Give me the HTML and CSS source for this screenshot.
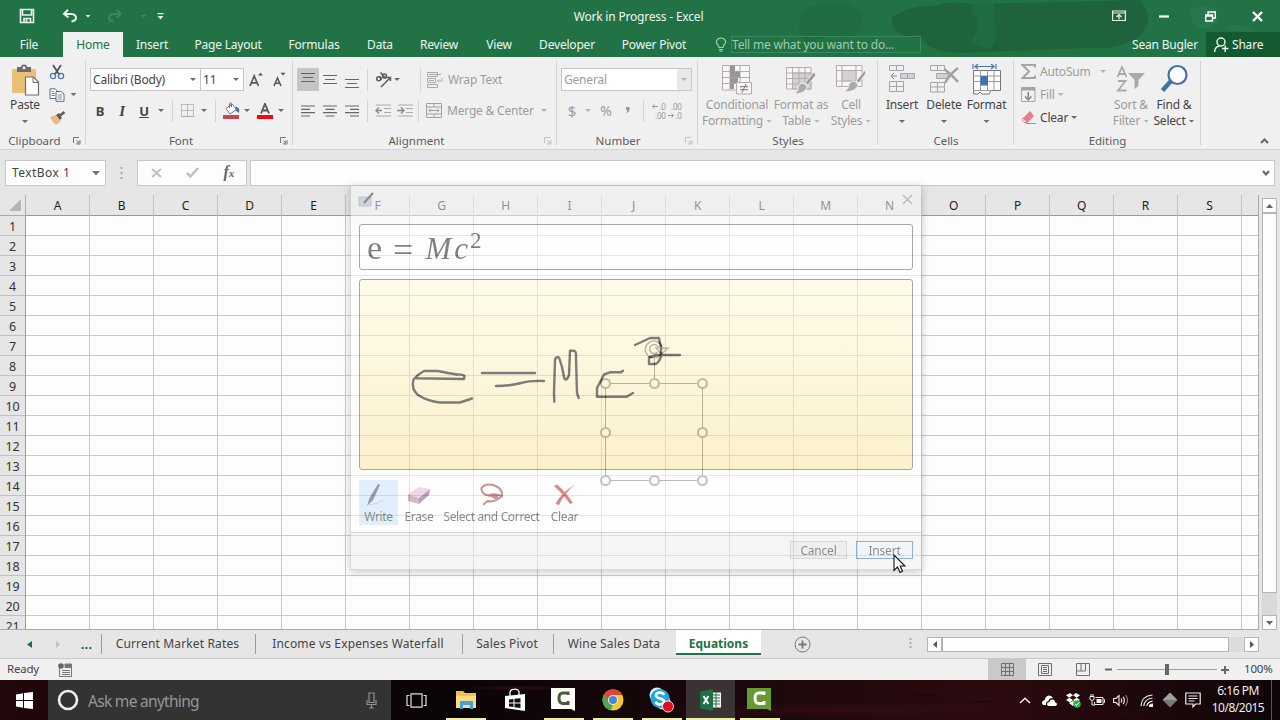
FILE: index.html
```html
<!DOCTYPE html>
<html lang="en">
<head>
<meta charset="utf-8">
<title>Work in Progress - Excel</title>
<link rel="stylesheet" href="styles.css">
</head>
<body>
<div class="app">
  <header class="top">
    <svg class="top-art" width="500" height="57" viewBox="780 0 500 57">
      <path d="M800 22Q802 6 822 4Q852 0 862 16Q866 36 842 38Q830 34 812 42Q796 40 800 22Z" fill="#206c41"/>
      <path d="M892 18Q910 4 935 6Q950 0 975 4L1140 0Q1156 18 1140 36Q1120 50 1090 48L980 52Q930 56 922 38Q890 38 892 18Z" fill="#1e633c"/>
      <path d="M972 12Q984 26 970 42L990 50Q1000 38 994 22L994 4L972 4Z" fill="#206c41"/>
      <path d="M1190 12Q1200 2 1214 8Q1224 22 1208 28Q1192 30 1190 12ZM1222 30Q1240 18 1254 32Z" fill="#2a7a4e" opacity=".6"/>
    </svg>
    <div class="titlebar">
      <span class="ic"><svg width="16" height="16" viewBox="0 0 16 16" fill="none" stroke="#e6f2ea" stroke-width="1.6"><path d="M1.5 1.5H14.500V14.500H1.500ZM3.500 2V7H12.500V2M5 14V10.500H11.500V14M7.500 11V14"/></svg></span>
      <span class="ic"><svg width="16" height="14" viewBox="0 0 16 14" fill="none" stroke="#e6f2ea" stroke-width="2"><path d="M6 .8L2 5L6.500 8.500M2.500 5H9.500Q14 5.500 14 9Q13.500 12 9.500 12.500"/></svg></span>
      <span class="ic"><i class="dd light"></i></span>
      <span class="ic"><svg width="16" height="14" viewBox="0 0 16 14" fill="none" stroke="#418961" stroke-width="1.800"><path d="M10 .8L14 5L9.500 8.500M13.500 5H6.500Q2 5.500 2 9Q2.500 12 6.500 12.500"/></svg></span>
      <span class="ic"><i class="dd faint"></i></span>
      <span class="ic"><svg width="7" height="7" viewBox="0 0 7 7" fill="#e6f2ea"><path d="M.5 0H6.500V1.200H.5ZM.5 3H6.500L3.500 6.500Z"/></svg></span>
      <span class="title">Work in Progress - Excel</span>
      <span class="ic"><svg width="14" height="12" viewBox="0 0 14 12" fill="none" stroke="#e6f2ea" stroke-width="1.200"><path d="M.6 1H13.400V10.500H.6ZM.6 3H13.400M7 9.500V5M4.500 7L7 4.600L9.500 7"/></svg></span>
      <span class="ic"><svg width="10" height="3"><path d="M0 1.500H10" stroke="#fff" stroke-width="2.200"/></svg></span>
      <span class="ic"><svg width="11" height="11" viewBox="0 0 11 11" fill="none" stroke="#fff" stroke-width="1.400"><path d="M.7 4H7.500V10H.7ZM.7 5H7.500M3 3.500V1H10.300V7H8"/></svg></span>
      <span class="ic"><svg width="11" height="11"><path d="M1 1L10 10M10 1L1 10" stroke="#fff" stroke-width="2.300"/></svg></span>
    </div>
    <nav class="tabs">
      <span>File</span><span></span><span class="on">Home</span><span>Insert</span><span>Page Layout</span><span>Formulas</span><span>Data</span><span>Review</span><span>View</span><span>Developer</span><span>Power Pivot</span>
      <span class="ic"><svg width="12" height="15" viewBox="0 0 12 15" fill="none" stroke="#9fcbb0" stroke-width="1.200"><path d="M4 10.500Q4 9 2.500 7.500Q1 6 1.500 4Q2.500 1 6 1Q9.500 1 10.500 4Q11 6 9.500 7.500Q8 9 8 10.500ZM4 12.500H8M4.500 14.200H7.500"/></svg></span>
      <span class="tell">Tell me what you want to do...</span>
      <span></span><span>Sean Bugler</span>
      <span class="share"><svg width="16" height="16" viewBox="0 0 16 16" fill="none" stroke="#e6f2ea" stroke-width="1.500"><circle cx="8" cy="5" r="4"/><path d="M1.500 15Q2 9.500 6.500 9M9 11.500H15.500M12.200 8.500V15"/></svg>Share</span>
    </nav>
  </header>

  <section class="ribbon">
    <div class="group g-clip">
      <div class="body">
        <div class="big"><span class="pic"><svg width="30" height="32" viewBox="0 0 30 32"><path d="M2 5H26V29H2Z" fill="#e9bf78"/><path d="M7 3H11Q11 .5 14 .5Q17 .5 17 3H21V8H7Z" fill="#6b6b6b"/><circle cx="14" cy="3.700" r="1.500" fill="#eee"/><path d="M15.500 13H23.500L28.500 18V31H15.500Z" fill="#fff" stroke="#6f6f6f" stroke-width="1.200"/><path d="M23 13V18.500H28" fill="none" stroke="#6f6f6f"/></svg></span><span>Paste</span><i class="dd"></i></div>
        <div class="stack">
          <span class="ic"><svg width="16" height="16" viewBox="0 0 16 16" fill="none"><path d="M4 1L10.500 11M12 1L5.500 11" stroke="#555" stroke-width="1.800"/><circle cx="4" cy="12" r="2.600" stroke="#4f78a8" stroke-width="1.300"/><circle cx="12" cy="12" r="2.600" stroke="#4f78a8" stroke-width="1.300"/></svg></span><span></span>
          <span class="ic"><svg width="16" height="14" viewBox="0 0 16 14" fill="#fff" stroke="#5b6e88"><path d="M1 .8H6L8.500 3V10.500H1Z"/><path d="M7 3.500H12L15 6V13.300H7Z"/><path d="M2.500 3.500H5M2.500 5.500H6M2.500 7.500H6M8.500 7H13M8.500 9H13M8.500 11H13" stroke-width=".8"/></svg></span><i class="dd"></i>
          <span class="ic"><svg width="17" height="14" viewBox="0 0 17 14"><path d="M1 6L7 4L12 10L7 14L4 11Z" fill="#e5bd80"/><path d="M7 4L10 2L13 7L11 9Z" fill="#5c5c5c"/><path d="M11 4.500L15.500 1" stroke="#5c5c5c" stroke-width="2.500"/></svg></span><span></span>
        </div>
      </div>
      <div class="name">Clipboard<svg class="launch" width="8" height="8" viewBox="0 0 8 8"><path d="M.5 6V.5H6M3.500 3.500L6 6M7 3.500V7H3.500Z"/></svg></div>
    </div>

    <div class="group g-font">
      <div class="body rows">
        <div class="font1"><span class="field">Calibri (Body)<i class="dd"></i></span><span class="field">11<i class="dd"></i></span>
          <span class="ic"><svg width="14" height="16" viewBox="0 0 14 16" fill="none" stroke="#5b5b5b" stroke-width="1.700"><path d="M1 14L5.200 4L9.500 14M2.500 10.800H8"/><path d="M9 3.500L11.500 .8L14 3.500Z" fill="#456" stroke="none"/></svg></span>
          <span class="ic"><svg width="13" height="16" viewBox="0 0 13 16" fill="none" stroke="#5b5b5b" stroke-width="1.600"><path d="M1 14L4.500 6L8 14M2.200 11.200H6.800"/><path d="M7.500 .8H12.500L10 3.500Z" fill="#456" stroke="none"/></svg></span></div>
        <div class="font2"><b>B</b><b class="it">I</b><b class="un">U</b><i class="dd"></i><i class="vs"></i>
          <svg width="13" height="13" viewBox="0 0 13 13" fill="none" stroke="#8c8c8c"><path d="M.5 .5H12.500V12.500M.5 .5V12.500M6.500 .5V12.500M.5 6.500H12.500" stroke-dasharray="1 1"/><path d="M0 12.500H13" stroke="#aaa"/></svg><i class="dd"></i><i class="vs"></i>
          <svg width="17" height="17" viewBox="0 0 17 17"><path d="M3 6.500L9 2L13.500 7.500L7 12Z" fill="#fff" stroke="#777"/><path d="M6.500 6V1.500Q7.500 0 8.500 1.500V5" fill="none" stroke="#666"/><path d="M12.500 4.500Q18 6 15.500 11L12.500 8Z" fill="#4a72a5"/><path d="M0 13H16V17H0Z" fill="#cc4651"/></svg><i class="dd"></i>
          <svg width="16" height="16" viewBox="0 0 16 16"><path d="M4 10.500L8 .8L12 10.500M5.500 7.500H10.500" fill="none" stroke="#595959" stroke-width="1.800"/><path d="M0 12H16V16H0Z" fill="#f00a14"/></svg><i class="dd"></i></div>
      </div>
      <div class="name">Font<svg class="launch" width="8" height="8" viewBox="0 0 8 8"><path d="M.5 6V.5H6M3.500 3.500L6 6M7 3.500V7H3.500Z"/></svg></div>
    </div>

    <div class="group g-align">
      <div class="body rows">
        <div class="al1"><span class="ic sel"><svg width="14" height="18"><path d="M0 3.500H14M2 7.500H12M0 11.500H14" class="ln" transform="translate(0 -1)"/></svg></span>
          <svg width="14" height="10"><path d="M0 .5H14M2 4.500H12M0 8.500H14" class="ln"/></svg>
          <svg width="14" height="18"><path d="M0 9.500H14M2 13.500H12M0 17.500H14" class="ln" transform="translate(0 -1)"/></svg><i class="vs"></i>
          <svg width="17" height="16" viewBox="0 0 17 16" fill="none" stroke="#5e5e5e" stroke-width="1.500"><circle cx="3.700" cy="6.700" r="2"/><path d="M4.500 4.300L7 7.500M5.500 .5L11 6.500"/><circle cx="9.500" cy="4" r="2"/><path d="M6 15L15.500 5.500M12 5.500H15.500V9"/></svg><i class="dd"></i><span></span><i class="vs"></i>
          <svg width="16" height="16" viewBox="0 0 16 16" fill="none" stroke="#aaa"><path d="M.5 .5H10.500V4.500H.5ZM.5 6.500H8.500V10.500H.5ZM.5 12.500H10.500V15.500H.5ZM2 2.500H14M2 8.500H7M15 6V9H10.500M12 7.500L10.500 9L12 10.500"/></svg><span class="dim tx">Wrap Text</span></div>
        <div class="al2"><svg width="14" height="12"><path d="M0 1H14M0 4.300H9M0 7.600H14M0 11H9" class="ln"/></svg>
          <svg width="14" height="12"><path d="M0 1H14M2.500 4.300H11.500M0 7.600H14M2.500 11H11.500" class="ln"/></svg>
          <svg width="14" height="12"><path d="M0 1H14M5 4.300H14M0 7.600H14M5 11H14" class="ln"/></svg><i class="vs"></i>
          <svg width="16" height="13" fill="none" stroke="#aaa"><path d="M1 1H16M9 4.500H16M9 8.500H16M1 12H16"/><path d="M1 6.500H7M4 3.500L1 6.500L4 9.500" stroke="#8a8a8a" stroke-width="1.400"/></svg>
          <svg width="16" height="13" fill="none" stroke="#aaa"><path d="M1 1H16M9 4.500H16M9 8.500H16M1 12H16"/><path d="M0 6.500H7M4 3.500L7 6.500L4 9.500" stroke="#8a8a8a" stroke-width="1.400"/></svg><i class="vs"></i>
          <svg width="16" height="15" viewBox="0 0 16 15" fill="none" stroke="#a59ea3"><path d="M.5 .5H15.500V14.500H.5ZM.5 4H15.500M.5 11H15.500M8 .5V4M8 11V14.500M3 7.500H13M5 5.500L3 7.500L5 9.500M11 5.500L13 7.500L11 9.500"/></svg><span class="dim tx">Merge &amp; Center</span><i class="dd pale"></i></div>
      </div>
      <div class="name">Alignment<svg class="launch pale" width="8" height="8" viewBox="0 0 8 8"><path d="M.5 6V.5H6M3.500 3.500L6 6M7 3.500V7H3.500Z"/></svg></div>
    </div>

    <div class="group g-num">
      <div class="body rows">
        <div class="num1"><span class="field dim">General<span class="drop"><i class="dd pale"></i></span></span></div>
        <div class="num2"><span class="sym">$</span><i class="dd pale"></i><span class="sym pc">%</span><svg width="5" height="7"><path d="M1 0H4.500V3Q4 5.500 1 6.500Q2.500 4.500 2 3H1Z" fill="#999"/></svg><i class="vs"></i>
          <span class="dec"><span><svg width="6" height="5" fill="none" stroke="#999"><path d="M.5 2.500H6M2.500 .5L.5 2.500L2.500 4.500"/></svg>.0</span><span>.00</span></span>
          <span class="dec"><span>.00</span><span><svg width="6" height="5" fill="none" stroke="#999"><path d="M0 2.500H5.500M3.500 .5L5.500 2.500L3.500 4.500"/></svg>.0</span></span></div>
      </div>
      <div class="name">Number<svg class="launch pale" width="8" height="8" viewBox="0 0 8 8"><path d="M.5 6V.5H6M3.500 3.500L6 6M7 3.500V7H3.500Z"/></svg></div>
    </div>

    <div class="group g-style">
      <div class="body">
        <div class="big dim"><span class="pic"><svg width="30" height="31" viewBox="0 0 30 31" fill="none" stroke="#b3abb0"><path d="M.5 1.500H27.500V26H.5Z" fill="#f8f6f7"/><path d="M.5 7.500H27M.5 13.500H27M.5 19.500H27M8 1V26M18 1V26"/><path d="M8 1.500H13V7.500H8ZM8 7.500H18V13H8ZM8 13.500H16V19H8ZM8 19.500H12V25H8Z" fill="#99969a" stroke="none"/><path d="M14.500 18.500H29.500V30H14.500Z" fill="#f6f3f5"/><path d="M18 22.700H26M18 25.700H26M24 20L20 28.500" stroke="#777"/></svg></span><span>Conditional</span><span>Formatting<i class="dd pale"></i></span></div>
        <div class="big dim"><span class="pic"><svg width="30" height="31" viewBox="0 0 30 31" fill="none" stroke="#b3abb0"><path d="M.5 3.500H25V25H.5Z" fill="#f8f6f7"/><path d="M6.500 9H25V25H6.500Z" fill="#d3d0d6"/><path d="M.5 9H25M.5 14.500H25M.5 20H25M6.500 3V25M13 3V25M19 3V25"/><path d="M28 8L19 19L22 21L30 11Z" fill="#999" stroke="#eee"/><path d="M17 19Q21 20 21 24Q18 30 8 30Q13 27 12.500 22Q14 19 17 19Z" fill="#aaa" stroke="#f0f0f0"/></svg></span><span>Format as</span><span>Table<i class="dd pale"></i></span></div>
        <div class="big dim"><span class="pic"><svg width="30" height="31" viewBox="0 0 30 31" fill="none" stroke="#b3abb0"><path d="M.5 1.500H26V22.500H.5Z" fill="#f8f6f7"/><path d="M.5 6.500H26M.5 17H26M6 1V22M20 1V22"/><path d="M6 6.500H20V17H6Z" fill="#d3d0d6"/><path d="M29 6L20 17L23 19L30 9Z" fill="#999" stroke="#eee"/><path d="M18 17Q22 18 22 22Q19 28 8 28Q13 25 13 20Q15 17 18 17Z" fill="#aaa" stroke="#f0f0f0"/></svg></span><span>Cell</span><span>Styles<i class="dd pale"></i></span></div>
      </div>
      <div class="name">Styles</div>
    </div>

    <div class="group g-cells">
      <div class="body">
        <div class="big"><span class="pic"><svg width="28" height="30" viewBox="0 0 28 30" fill="none" stroke="#aaa3a8"><path d="M1.500 1.500H15.500V6.500H1.500ZM8.500 1.500V6.500M1.500 17.500H15.500V27.500H1.500ZM8.500 17.500V27.500M1.500 22.500H15.500"/><path d="M12.500 9.500H26.500V14.500H12.500ZM19.500 9.500V14.500" fill="#ccd0d8"/><path d="M3 12H9M6 9L3 12L6 15" stroke="#888"/></svg></span><span>Insert</span><i class="dd"></i></div>
        <div class="big"><span class="pic"><svg width="30" height="30" viewBox="0 0 30 30" fill="none" stroke="#aaa3a8"><path d="M1.500 1.500H15.500V6.500H1.500ZM8.500 1.500V6.500M1.500 18.500H15.500V28H1.500ZM8.500 18.500V28M1.500 23H15.500"/><path d="M7.500 9.500H19V14.500H7.500Z" fill="#ccd0d8"/><path d="M15 5Q21 9 29 18M29 4Q21 10 16 19" stroke="#a2a0a2" stroke-width="2.500"/></svg></span><span>Delete</span><i class="dd"></i></div>
        <div class="big"><span class="pic"><svg width="30" height="32" viewBox="0 0 30 32" fill="none" stroke="#777"><path d="M1 0V5M24 0V5M3 2.500H22M6 0L3 2.500L6 5M19 0L22 2.500L19 5" stroke="#4b76a8" stroke-width="1.200"/><path d="M1.500 6.500H28.500V26.500H19L17 30H10L8 28L6 30H1.500Z" fill="#fff"/><path d="M1 12H28M1 17.500H28M1 26.500H20" stroke="#999"/><path d="M8.500 6V26M15.500 6V26M22 6V26" stroke="#999"/><path d="M8.500 12H16V21.500H8.500Z" fill="#3f73b0" stroke="none"/></svg></span><span>Format</span><i class="dd"></i></div>
      </div>
      <div class="name">Cells</div>
    </div>

    <div class="group g-edit">
      <div class="body">
        <div class="stack3">
          <svg width="15" height="15" viewBox="0 0 15 15"><path d="M14 3.500V1H1.500L8 7.500L1.500 14H14V11.500" fill="none" stroke="#a5a5a5" stroke-width="2"/></svg><span class="dim">AutoSum</span><i class="dd pale"></i>
          <svg width="15" height="15" viewBox="0 0 15 15" fill="none" stroke="#a5a5a5"><path d="M.5 .5H14V14.500H.5Z"/><path d="M.5 2H14" stroke-width="3"/><path d="M7.300 5V12.500M4 9.500L7.300 12.800L10.500 9.500" stroke="#888" stroke-width="1.600"/></svg><span class="dim">Fill<i class="dd pale"></i></span><span></span>
          <svg width="15" height="14" viewBox="0 0 15 14"><path d="M2 7L9 0L13 5L7 11.500H4Z" fill="#e2818f"/><path d="M2 7L6 11.500H3.500L1 9Z" fill="#fff" stroke="#d46d7d" stroke-width=".8"/><path d="M5 12.500H15" stroke="#999"/></svg><span>Clear<i class="dd"></i></span><span></span>
        </div>
        <div class="big dim"><span class="pic"><svg width="30" height="30" viewBox="0 0 30 30" fill="none" stroke="#a9a9a9" stroke-width="1.800"><path d="M1.500 13L6 3L10.500 13M3 10H9M2 17H9.500L2 26.500H10.500"/><path d="M12 9H29L22.500 16V22L18.500 25V16Z" fill="#aaa" stroke="none"/></svg></span><span>Sort &amp;</span><span>Filter<i class="dd pale"></i></span></div>
        <div class="big"><span class="pic"><svg width="28" height="30" viewBox="0 0 28 30"><path d="M2.500 26.500L11 17" stroke="#4472a8" stroke-width="4.500"/><circle cx="17.500" cy="11" r="9" fill="#fff" stroke="#4472a8" stroke-width="2.200"/></svg></span><span>Find &amp;</span><span>Select<i class="dd"></i></span></div>
      </div>
      <div class="name">Editing</div>
    </div>
    <div class="collapse"><svg width="9" height="6"><path d="M1 5L4.500 1.500L8 5" fill="none" stroke="#666" stroke-width="2"/></svg></div>
  </section>

  <section class="fbar">
    <div class="nbox"><span>TextBox 1</span><svg width="8" height="5"><path d="M0 0H8L4 4.500Z" fill="#777"/></svg></div>
    <svg class="grip" width="3" height="12"><path d="M1.500 0V12" stroke="#aaa" stroke-width="2" stroke-dasharray="2 3"/></svg>
    <div class="fxbox"><svg width="11" height="10"><path d="M1 1L10 9M10 1L1 9" stroke="#c0c0c0" stroke-width="2"/></svg><svg width="13" height="11"><path d="M1 6L4.500 9.500L12 1" stroke="#c0c0c0" stroke-width="2.500" fill="none"/></svg><em>f<small>x</small></em></div>
    <div class="finput"><svg width="8" height="6"><path d="M1 1L4 4.500L7 1" fill="none" stroke="#666" stroke-width="2"/></svg></div>
  </section>

  <main class="work">
    <div class="sheet">
      <div class="corner"><svg width="12" height="12"><path d="M12 0V12H0Z" fill="#b5b5b5"/></svg></div>
      <div class="cols"><span>A</span><span>B</span><span>C</span><span>D</span><span>E</span><span>F</span><span>G</span><span>H</span><span>I</span><span>J</span><span>K</span><span>L</span><span>M</span><span>N</span><span>O</span><span>P</span><span>Q</span><span>R</span><span>S</span></div>
      <div class="nums"><span>1</span><span>2</span><span>3</span><span>4</span><span>5</span><span>6</span><span>7</span><span>8</span><span>9</span><span>10</span><span>11</span><span>12</span><span>13</span><span>14</span><span>15</span><span>16</span><span>17</span><span>18</span><span>19</span><span>20</span><span>21</span></div>
      <div class="cells"></div>
    </div>
    <div class="vscroll"><span class="sbtn"><svg width="7" height="4"><path d="M0 4H7L3.500 0Z" fill="#666"/></svg></span><span class="vthumb"></span><span class="vtrack"></span><span class="sbtn"><svg width="7" height="4"><path d="M0 0H7L3.500 4Z" fill="#666"/></svg></span></div>

    <svg class="shape" width="112" height="150" viewBox="598 338 112 150" fill="none" stroke="#707070">
      <path d="M605.500 383.500H702.500V480.500H605.500ZM654.500 359V383"/>
      <g fill="#fff" stroke="#808080" stroke-width="2"><circle cx="605.500" cy="383.500" r="4.500"/><circle cx="654.500" cy="383.500" r="4.500"/><circle cx="702.500" cy="383.500" r="4.500"/><circle cx="605.500" cy="432.500" r="4.500"/><circle cx="702.500" cy="432.500" r="4.500"/><circle cx="605.500" cy="480.500" r="4.500"/><circle cx="654.500" cy="480.500" r="4.500"/><circle cx="702.500" cy="480.500" r="4.500"/></g>
      <path d="M661 354A8.500 8.500 0 1 1 662 347M657.500 352A4.500 4.500 0 1 1 658.500 348M658.500 348H656L661.500 354L668 348H662" stroke-width="1.400"/>
    </svg>

    <div class="dialog">
      <div class="dhead"><svg width="17" height="16" viewBox="0 0 17 16"><path d="M1 5H13V14H1Z" fill="#b8c4d0" stroke="#9aa6b2"/><path d="M6 11L15 1" stroke="#333" stroke-width="2"/></svg><svg width="11" height="11"><path d="M1 1L10 10M10 1L1 10" stroke="#8c8c8c" stroke-width="1.400"/></svg></div>
      <div class="preview"><span class="up">e</span><span class="eq">=</span><i class="var">M</i><i class="var c">c</i><sup>2</sup></div>
      <div class="ink"><svg width="553" height="189" viewBox="360 280 553 189" fill="none" stroke="#080300" stroke-width="2.400" stroke-linejoin="round" stroke-linecap="round">
        <path d="M416.700 378.300L464 379L464.500 376Q462 374 457 374.500L448 373L438 371L424 371Q418 374 413.500 379.500Q411 389 418 395Q427 401 440 402.500H460L472 398.500"/>
        <path d="M482 373H535M496 386Q510 386 521 383Q530 380.500 544 381"/>
        <path d="M554.300 401.700L554 393L555 360Q556 356 559 357.500L562 367L564 377Q566 383 569 375L570 350.700H574Q576.500 351 576 358L577 393L578.700 398"/>
        <path d="M623 370.700L621 372.300H610L604 374.500L597 388V396.700H626.700L633 393"/>
        <path d="M635 345L650 338H659L661 348V357Q658 364 655 364H649V357.500L656.700 355H680"/>
      </svg></div>
      <div class="tools">
        <div class="tool on"><svg width="20" height="24" viewBox="0 0 20 24"><path d="M1 23L3.500 15L12 1L14 2L7 17Z" fill="#3d3f48"/><path d="M3 22Q12 21 17 17" stroke="#aaa" fill="none"/></svg>Write</div>
        <div class="tool"><svg width="24" height="20" viewBox="0 0 24 20"><path d="M1 9L12 2L23 4L12 13Z" fill="#dfb7cd"/><path d="M1 9L12 13V19L1 16Z" fill="#b07a9c"/><path d="M12 13L23 4L22 10L12 19Z" fill="#7d4a68"/></svg>Erase</div>
        <div class="tool"><svg width="24" height="24" viewBox="0 0 24 24" fill="none" stroke="#9a2c30" stroke-width="2"><path d="M18 13Q1 14 1.500 5Q5 0 13 2Q23 5 22 13Q14 10 10 12Q18 18 22 13M22 13Q14 20 8 18Q5 19 3.500 22"/></svg>Select and Correct</div>
        <div class="tool"><svg width="24" height="24" viewBox="0 0 24 24" fill="#c01c12"><path d="M1 3L4 1.500Q12 8 20 20L17 21Q11 12 1 3ZM22.500 1Q12 9 6 22L2.500 21Q8 10 22.500 1Z"/></svg>Clear</div>
      </div>
      <div class="dfoot"><span class="btn">Cancel</span><span class="btn pri">Insert</span></div>
    </div>
    <svg class="cursor" width="13" height="20" viewBox="0 0 13 20"><path d="M1 1V16.500L4.500 13L7 18.500L9.500 17.300L7.200 12H12Z" fill="#fff" stroke="#111" stroke-width="1.100"/></svg>
  </main>

  <section class="stabs">
    <span class="ic"><svg width="5" height="7"><path d="M5 0V7L0 3.500Z" fill="#1c6b45"/></svg></span><span class="ic"><svg width="5" height="7"><path d="M0 0V7L4 3.500Z" fill="#c2c2c2"/></svg></span><b class="dots">...</b>
    <span class="st">Current Market Rates</span><span class="st">Income vs Expenses Waterfall</span><span class="st">Sales Pivot</span><span class="st">Wine Sales Data</span><span class="st cur">Equations</span>
    <span class="ic"><svg width="17" height="17" fill="none" stroke="#777"><circle cx="8.500" cy="8.500" r="7.500"/><path d="M4.500 8.500H12.500M8.500 4.500V12.500" stroke-width="1.800"/></svg></span>
    <span></span><span class="ic"><svg width="3" height="12"><path d="M1.500 0V12" stroke="#aaa" stroke-width="2" stroke-dasharray="2 2"/></svg></span>
    <div class="hscroll"><span class="sbtn"><svg width="4" height="7"><path d="M4 0V7L0 3.500Z" fill="#555"/></svg></span><span class="hthumb"></span><span></span><span class="sbtn"><svg width="4" height="7"><path d="M0 0V7L4 3.500Z" fill="#555"/></svg></span></div>
  </section>

  <section class="status">
    <span class="ready">Ready</span>
    <span class="ic"><svg width="14" height="14" viewBox="0 0 14 14"><path d="M1.500 5V13.500H13.500V1H7V4.500H13.500M4 7.500H12M4 9.500H12M4 11.500H12" fill="none" stroke="#777"/><path d="M7 1H13V4H7Z" fill="#777"/><circle cx="3" cy="3" r="2.800" fill="#666"/></svg></span>
    <span></span>
    <span class="ic vsel"><svg width="13" height="13" fill="none" stroke="#707070"><path d="M.5 .5H12.500V12.500H.5ZM.5 4.500H12.500M.5 8.500H12.500M4.500 .5V12.500M8.500 .5V12.500"/></svg></span>
    <span class="ic"><svg width="14" height="13" fill="none" stroke="#707070"><path d="M.5 .5H13.500V12.500H.5ZM3.500 2.500H10.500V10.500H3.500ZM5 4.500H9M5 6.500H9M5 8.500H9"/></svg></span>
    <span class="ic"><svg width="14" height="13" fill="none" stroke="#707070"><path d="M.5 .5H13.500V12.500H.5ZM5 .5V8H.5M5 8H9.500V.5"/></svg></span>
    <span class="ic"><svg width="7" height="7"><path d="M0 3.500H7" stroke="#666" stroke-width="2"/></svg></span>
    <span class="ic"><svg width="100" height="12"><path d="M0 5.500H100" stroke="#a0a0a0"/><path d="M48 0H52V11H48Z" fill="#666"/></svg></span>
    <span class="ic"><svg width="8" height="8"><path d="M0 4H8M4 0V8" stroke="#666" stroke-width="2"/></svg></span>
    <span class="pct">100%</span>
  </section>

  <footer class="task">
    <span class="ic"><svg width="17" height="17" viewBox="0 0 17 17" fill="#fff"><path d="M0 2.500L7 1.300V8H0ZM8 1.100L17 0V8H8ZM0 9H7V15.700L0 14.600ZM8 9H17V17L8 15.900Z"/></svg></span>
    <div class="search"><svg width="22" height="22"><circle cx="11" cy="11" r="9" fill="none" stroke="#eee" stroke-width="2.600"/></svg><span>Ask me anything</span><svg width="11" height="17" viewBox="0 0 11 17" fill="none" stroke="#909090" stroke-width="1.200"><path d="M3 1H8V10.500H3ZM1 8V12.500H10V8M5.500 12.500V16M3 16H8"/></svg></div>
    <span class="app-ic"><svg width="21" height="15" viewBox="0 0 21 15" fill="none" stroke="#ddd" stroke-width="1.200"><path d="M5 .8H16V14.200H5ZM3.500 2.500H1V12.500H3.500M17.500 2.500H20V12.500H17.500"/></svg></span>
    <span class="app-ic open"><svg width="22" height="20" viewBox="0 0 22 20"><path d="M1 1H8L10 3H21V18H1Z" fill="#f0c24d"/><path d="M1 6H21V18H1Z" fill="#fbdc83"/><path d="M5 11H18V19H15V15H8V19H5Z" fill="#3fa5d8"/></svg></span>
    <span class="app-ic"><svg width="22" height="24" viewBox="0 0 22 24"><path d="M1 8L21 6V23L1 20Z" fill="#fff"/><path d="M6 8V4Q7 1 10 1.500Q13 0 15 3.500V7" fill="none" stroke="#fff" stroke-width="1.300"/><path d="M5 11.500L9.500 11V14.500H5ZM10.500 10.800L16.500 10.300V14.500H10.500ZM5 15.500H9.500V19L5 18.400ZM10.500 15.500H16.500V20L10.500 19.200Z" fill="#111"/></svg></span>
    <span class="app-ic open"><svg width="25" height="24" viewBox="0 0 25 24"><path d="M0 0H24V23L20 21H0Z" fill="#fff"/><path d="M17 7V5H11.500Q8 5.500 8 10Q8 15 11.500 15.500H17V13" fill="none" stroke="#4a5c34" stroke-width="3"/></svg></span>
    <span class="app-ic open"><svg width="22" height="22" viewBox="0 0 22 22"><circle cx="11" cy="11" r="10.500" fill="#f3c92b"/><path d="M2 5.500A10.500 10.500 0 0 1 20.500 6H11L6 12Z" fill="#dc4938"/><path d="M2 5.500L8 15L11 16L8.500 21.200A10.500 10.500 0 0 1 2 5.500Z" fill="#4ba653"/><circle cx="11" cy="11" r="5" fill="#f2f2f2"/><circle cx="11" cy="11" r="4" fill="#4688d8"/></svg></span>
    <span class="app-ic open"><svg width="26" height="26" viewBox="0 0 26 26"><circle cx="8" cy="8" r="7.500" fill="#d6effb"/><circle cx="14" cy="15" r="7.500" fill="#d6effb"/><circle cx="11" cy="11.500" r="9.500" fill="#24a5de"/><path d="M15 8Q14 5.500 11 5.500Q7 5.500 7 8.500Q7 10.500 11 11.500Q15.500 12.500 15 15Q14 17.500 11 17.500Q8 17.500 6.500 15" fill="none" stroke="#fff" stroke-width="2.500"/><circle cx="19" cy="19.500" r="5.500" fill="#d9101e" stroke="#f4dfe2"/></svg></span>
    <span class="app-ic open act"><svg width="22" height="22" viewBox="0 0 22 22"><path d="M11 3.500H21V18.500H11Z" fill="#f4f8f5"/><path d="M12 6H20M12 9H20M12 12H20M12 15H20M16 4V18" stroke="#217346"/><path d="M0 2.500L13 0V22L0 19.500Z" fill="#1f6f43"/><path d="M3.500 7L8.500 15M8.500 7L3.500 15" stroke="#fff" stroke-width="1.800"/></svg></span>
    <span class="app-ic open"><svg width="25" height="24" viewBox="0 0 25 24"><path d="M0 0H24V23L20 21H0Z" fill="#669b2f"/><path d="M17 7V5H11.500Q8 5.500 8 10Q8 15 11.500 15.500H17V13" fill="none" stroke="#fff" stroke-width="2.800"/></svg></span>
    <span></span>
    <span class="ic"><svg width="12" height="7"><path d="M1 6L6 1.200L11 6" fill="none" stroke="#eee" stroke-width="1.500"/></svg></span>
    <span class="ic"><svg width="15" height="11" viewBox="0 0 15 11" fill="#fff"><path d="M0 8Q0 5.500 3 5Q3 1 7 .5Q10 .5 11 3Q7 3 6.500 6Q3.500 6.500 4 10H2Q0 10 0 8Z"/><path d="M5 9Q5 7 7.500 7Q8 4 11 4.500Q13 5 13 7.200Q15 7.500 15 9.200Q15 11 13 11H7Q5 11 5 9Z"/></svg></span>
    <span class="ic"><svg width="15" height="15" viewBox="0 0 15 15"><path d="M4 0L7 2.200L3.300 4.700L0 2.300ZM10 0L14 2.300L10.700 4.700L7 2.200ZM3.300 4.700L7 7L4 9.500L0 7ZM10.700 4.700L14 7L10 9.500L7 7ZM3 10L7 8L11 10L7 13Z" fill="#fff"/><circle cx="11" cy="11" r="3.800" fill="#30b050"/><path d="M9 11L10.500 12.500L13 9.500" fill="none" stroke="#fff"/></svg></span>
    <span class="ic"><svg width="16" height="12" viewBox="0 0 16 12" fill="none" stroke="#eee"><path d="M6.500 3.500H14V10.500H5.500V8M14.500 5.500H15.500V8.500H14.500M1 2.500H5V5.500Q3 7.500 1 5.500ZM2 0V2.500M4 0V2.500M3 7V11H6"/><path d="M7.500 5H12.500V9H7.500Z" fill="#eee" stroke="none"/></svg></span>
    <span class="ic"><svg width="16" height="13" viewBox="0 0 16 13" fill="none" stroke="#eee" stroke-width="1.100"><path d="M.6 4.500H3L6 1.500V11.500L3 8.500H.6ZM8 4.500Q9.500 6.500 8 8.500M10 2.800Q12.800 6.500 10 10.200"/><path d="M12.500 1Q16.500 6.500 12.500 12" stroke="#888"/></svg></span>
    <span class="ic"><svg width="13" height="13" viewBox="0 0 13 13" fill="none" stroke="#eee" stroke-width="1.200"><path d="M1 12Q1.500 2 12.500 1M3.800 12Q4.500 5 12.500 4M6.800 12Q7.500 8 12.500 7.200"/><path d="M9.500 12.500Q9.500 10 12.500 10V12.500Z" fill="#eee"/></svg></span>
    <span class="ic"><svg width="16" height="16"><path d="M8 .5L15.500 8H.5Z" fill="#a0a0a0"/><path d="M.5 8H15.500L8 15.500Z" fill="#777"/></svg></span>
    <span class="ic"><svg width="16" height="16" viewBox="0 0 16 16" fill="none" stroke="#eee" stroke-width="1.200"><path d="M.8 1H15.200V12H10.500L8 14.800V12H.8ZM3.500 4H12.500M3.500 6.500H12.500M3.500 9H9.500"/></svg></span>
    <span class="clock">6:16 PM<br>10/8/2015</span>
    <span class="peek"></span>
  </footer>
</div>
</body>
</html>
```

FILE: styles.css
```css
* { box-sizing: border-box; }
body { margin: 0; }
svg { display: block; flex: none; }
.app {
  width: 1280px; height: 720px; overflow: hidden;
  display: flex; flex-direction: column;
  font: 12px/16px "Noto Sans", "Open Sans", sans-serif;
  letter-spacing: -0.2px; color: #444; background: #e6e6e6; white-space: nowrap;
}
.ic { display: flex; align-items: center; justify-content: center; }
.dd { display: block; flex: none; width: 6px; height: 3px; background: #6c6c6c; clip-path: polygon(0 0, 100% 0, 50% 100%); }
.dd.light { background: #e6f2ea; }
.dd.faint { background: #418961; }
.dd.pale { background: #b4b4b4; }
.dim { color: #9c9c9c; }

/* Title bar and ribbon tabs */
.top { position: relative; height: 57px; background: #217346; color: #eef6f1; }
.top-art { position: absolute; right: 0; top: 0; }
.titlebar { position: relative; height: 32px; display: grid; align-items: center; grid-template-columns: 54px 32px 4px 48px 10px 24px 933px 27px 64px 29px 63px; }
.titlebar { padding-top: 0; grid-template-columns: 54px 32px 4px 49px 9px 24px 933px 27px 64px 29px 64px; }
.title { text-align: center; padding: 2px 0 0; }
.tabs { position: relative; height: 25px; display: grid; line-height: 25px; text-align: center; grid-template-columns: 58px 5px 60px 58px 94px 78px 54px 64px 56px 80px 94px 30px 190px 203px 82px 74px; }
.tabs .on { background: #f0f0f0; color: #217346; line-height: 25px; }
.tabs .ic { padding-left: 10px; }
.tabs .tell { margin: 4px 0 4px; line-height: 15px; border: 1px solid #3b8860; color: #9fcbb0; text-align: left; }
.share { display: flex; align-items: center; background: #145a30; padding-left: 7px; gap: 3px; }

/* Ribbon */
.ribbon { height: 93px; display: flex; background: #f0f0f0; border-bottom: 1px solid #d2d2d2; }
.group { display: flex; flex-direction: column; height: 92px; flex: none; background: linear-gradient(#d4d4d4, #d4d4d4) right 4px / 1px 84px no-repeat; }
.body { height: 76px; display: grid; }
.name { position: relative; text-align: center; line-height: 17px; color: #5c5c5c; letter-spacing: 0; font-size: 11.5px; }
.launch { position: absolute; right: 5px; top: 5px; fill: none; stroke: #777; }
.launch.pale { stroke: #c0c0c0; }
.big { display: flex; flex-direction: column; align-items: center; padding-top: 7px; }
.big > span { display: flex; align-items: center; gap: 3px; height: 16px; line-height: 18px; }
.big > .pic { height: 33px; align-items: flex-start; }
.big > .dd { margin-top: 7px; }
.rows { padding-top: 11px; display: flex; flex-direction: column; gap: 8px; }
.rows > div { height: 23px; display: grid; align-items: center; justify-items: center; }
.field { width: 100%; height: 23px; background: #fff; border: 1px solid #c6c6c6; display: flex; align-items: center; justify-content: space-between; padding: 0 4px 0 2px; }
.vs { width: 1px; height: 22px; background: #d4d4d4; }
.ln { stroke: #666; fill: none; stroke-width: 1.2; }
.tx { justify-self: start; }
.g-clip { width: 86px; }
.g-clip .body { grid-template-columns: 50px 36px; }
.g-clip .name { padding-right: 17px; }
.stack { padding-top: 3px; display: grid; grid-template-columns: 14px 19px; grid-template-rows: repeat(3, 23px); align-items: center; justify-items: center; }
.g-font { width: 207px; }
.g-font .name { padding-right: 17px; }
.rows > .font1 { margin-left: 4px; grid-template-columns: 111px 43px 24px 22px; }
.font1 .field + .field { border-left: 0; }
.rows > .font2 { margin-left: 3px; grid-template-columns: 22px 22px 22px 12px 10px 20px 14px 8px 24px 8px 28px 4px; }
.font2 b { font-size: 13px; line-height: 18px; }
.font2 .it { font: italic bold 15px/18px "Liberation Serif", serif; }
.un { text-decoration: underline; }
.g-align { width: 264px; }
.g-align .name { padding-right: 17px; }
.rows > .al1 { margin-left: 4px; grid-template-columns: 22px 22px 22px 8px 24px 4px 19px 4px 26px 1fr; }
.rows > .al2 { margin-left: 4px; grid-template-columns: 22px 22px 22px 8px 24px 20px 6px 26px 94px 6px; }
.sel { width: 22px; height: 23px; background: #c5c5c5; }
.g-num { width: 141px; }
.g-num .name { padding-right: 19px; }
.rows > .num1 { margin: 0 6px 0 4px; }
.num1 .field { padding-right: 0; }
.drop { width: 14px; height: 21px; background: #e9e9e9; display: grid; place-items: center; }
.rows > .num2 { margin-left: 2px; color: #9c9c9c; grid-template-columns: 26px 6px 30px 12px 20px 12px 20px; }
.sym { font-size: 15px; }
.pc { font-size: 14px; }
.dec { display: flex; flex-direction: column; align-items: flex-end; font-size: 8px; line-height: 9px; letter-spacing: -0.2px; color: #999; }
.dec span { display: flex; align-items: center; height: 9px; gap: 1px; }
.g-style { width: 180px; }
.g-style .body { grid-template-columns: 78px 50px 50px; }
.g-cells { width: 136px; }
.g-cells .body { grid-template-columns: 48px 36px 49px; }
.g-edit { width: 187px; }
.g-edit .body { grid-template-columns: 95px 44px 42px; }
.stack3 { padding-top: 3px; display: grid; grid-template-columns: 29px 57px 8px; grid-template-rows: repeat(3, 23px); align-items: center; }
.stack3 > svg { margin-left: 7px; }
.stack3 > span { display: flex; align-items: center; gap: 3px; margin-left: -3px; line-height: 18px; }
.collapse { flex: 1; display: flex; justify-content: flex-end; align-items: flex-end; padding: 0 11px 5px 0; }

/* Formula bar */
.fbar { height: 45px; display: flex; align-items: center; padding: 0 5px; }
.nbox, .fxbox, .finput { height: 26px; background: #fdfdfd; border: 1px solid #c8c8c8; display: flex; align-items: center; }
.nbox { width: 101px; justify-content: space-between; padding: 1px 5px 0 6px; letter-spacing: 0.45px; }
.grip { margin: 0 14px; }
.fxbox { width: 110px; justify-content: space-between; padding: 0 12px 0 13px; }
.fxbox em { font: italic bold 16px/18px "Liberation Serif", serif; color: #666; }
.fxbox small { font-size: 11px; }
.finput { flex: 1; margin-left: 3px; justify-content: flex-end; padding-right: 4px; }

/* Worksheet */
.work { position: relative; height: 435px; display: flex; }
.sheet { width: 1259px; height: 435px; overflow: hidden; display: grid; grid-template: 21px 414px / 26px 1233px; border-right: 1px solid #aaa; border-bottom: 1px solid #aaa; }
.corner { display: flex; justify-content: flex-end; align-items: flex-end; padding: 0 4px 4px 0; border-right: 1px solid #b0b0b0; border-bottom: 1px solid #aaa; }
.cols { display: grid; grid-template-columns: repeat(19, 64px); border-bottom: 1px solid #999; color: #222; text-align: center; line-height: 21px; }
.cols span { border-right: 1px solid #c0c0c0; }
.nums { overflow: hidden; border-right: 1px solid #999; text-align: center; color: #333; font-size: 12.5px; }
.nums span { display: block; height: 20px; line-height: 21px; border-bottom: 1px solid #c0c0c0; }
.cells { background: repeating-linear-gradient(90deg, transparent 0 63px, #c9c9c9 63px 64px), repeating-linear-gradient(transparent 0 19px, #c9c9c9 19px 20px), #fdfdfd; }
.vscroll { margin: 3px 0 0 3px; width: 15px; display: flex; flex-direction: column; }
.sbtn { width: 15px; height: 15px; flex: none; background: #fdfdfd; border: 1px solid #b5b5b5; display: flex; align-items: center; justify-content: center; }
.vthumb { height: 381px; background: #fdfdfd; border: 1px solid #b5b5b5; }
.vtrack { height: 22px; background: #d9d9d9; }
.shape { position: absolute; left: 598px; top: 143px; }

/* Equation dialog, fading out over the sheet */
.dialog { position: absolute; left: 350px; top: -10px; width: 572px; height: 385px; opacity: .52; background: #fff; border: 1px solid #bbb; box-shadow: 0 2px 8px rgba(0, 0, 0, .4); display: flex; flex-direction: column; }
.dhead { height: 38px; background: #f8f8f8; display: flex; justify-content: space-between; padding: 6px 8px 0 7px; }
.dhead svg:last-child { margin-top: 2px; }
.preview { margin: 0 8px; height: 46px; border: 1.500px solid #555; border-radius: 3px; padding-left: 7px; display: flex; align-items: baseline; line-height: 44px; font-family: "Liberation Serif", serif; font-size: 31px; color: #0c0c0c; letter-spacing: 0; }
.up { font-size: 34px; }
.eq { font-size: 36px; margin-left: 11px; position: relative; top: 3px; }
.var { margin-left: 12px; }
.var.c { margin-left: 3px; }
.preview sup { font-size: 23px; line-height: 1; position: relative; top: -11px; vertical-align: baseline; margin-left: 2px; }
.ink { margin: 9px 8px 0; height: 191px; border: 1.500px solid #555; border-radius: 3px; background: linear-gradient(#fffada, #fae59f); }
.tools { margin: 10px 8px 0; height: 45px; display: flex; color: #222; }
.tool { display: flex; flex-direction: column; align-items: center; justify-content: flex-end; letter-spacing: -0.35px; }
.tool svg { margin: auto; }
.tool:nth-child(1) { width: 39px; background: #c8e2fc; }
.tool:nth-child(2) { width: 42px; }
.tool:nth-child(3) { width: 103px; }
.tool:nth-child(4) { width: 43px; }
.tool:nth-child(1) svg { position: relative; left: -3px; }
.dfoot { margin-top: 7px; flex: 1; background: #ededed; border-top: 1px solid #b4b4b4; display: flex; justify-content: flex-end; gap: 9px; padding: 8px 8px 0 0; }
.btn { width: 57px; height: 18px; background: #e0e0e0; border: 1px solid #b5b5b5; color: #222; text-align: center; line-height: 18px; }
.pri { background: #e3f0fc; border-color: #2c6cae; }
.cursor { position: absolute; left: 893px; top: 359px; }

/* Sheet tabs */
.stabs { height: 28px; display: grid; align-items: center; letter-spacing: 0.15px; grid-template-columns: 44px 28px 29px 154px 207px 91px 123px 85px 82px 51px 33px 332px; }
.stabs > .ic:first-child { padding-left: 14px; }
.dots { text-align: center; color: #2c5a43; font-size: 13px; }
.st { height: 20px; line-height: 20px; text-align: center; border-left: 1px solid #999; padding-right: 2px; }
.st.cur { height: 25px; align-self: start; border: 0; border-bottom: 2px solid #217346; background: #fff; color: #217346; font-weight: bold; line-height: 27px; letter-spacing: 0; padding: 0; }
.hscroll { display: grid; grid-template-columns: 15px 287px 15px 15px; height: 15px; background: #dcdcdc; }
.hthumb { background: #fdfdfd; border: 1px solid #b5b5b5; }

/* Status bar */
.status { height: 22px; border-top: 1px solid #c8c8c8; background: #f0f0f0; display: grid; align-items: stretch; line-height: 20px; grid-template-columns: 47px 36px 905px 38px 38px 38px 12px 106px 10px 1fr; font-size: 11.500px; }
.ready { padding-left: 7px; }
.vsel { background: #c9c9c9; }
.pct { padding-left: 14px; }

/* Taskbar */
.task {
  height: 40px; display: grid; align-items: stretch;
  grid-template-columns: 48px 344px repeat(8, 49px) 230px 22px 26px 22px 26px 22px 28px 20px 26px 64px 1fr;
  background:
    radial-gradient(ellipse at 437px 14px, #050202, transparent 34px),
    radial-gradient(ellipse at 520px 8px, #340d14, transparent 60px),
    radial-gradient(ellipse at 925px 15px, #0a0505, transparent 26px),
    radial-gradient(ellipse at 983px 22px, #0d0806, transparent 34px),
    radial-gradient(ellipse at 1060px 5px, #14150c, transparent 50px),
    radial-gradient(ellipse at 1120px 34px, #2c0a10, transparent 40px),
    radial-gradient(ellipse at 850px 30px, #300c12, transparent 190px),
    linear-gradient(90deg, #22070b 0, #0a0405 35%, #1d080c 60%, #2c0a10 78%, #0f0607);
}
.search { background: #333; display: flex; align-items: center; padding: 0 14px 0 9px; margin-right: 1px; }
.search span { flex: 1; margin-left: 9px; font-size: 15.500px; line-height: 24px; padding-top: 1px; color: #969696; letter-spacing: -0.850px; letter-spacing: -0.85px; }
.search span { letter-spacing: -0.7px; }
.app-ic { display: flex; align-items: center; justify-content: center; background-repeat: no-repeat; }
.open { background-image: linear-gradient(#eef0a8, #eef0a8); background-size: 40px 2px; background-position: center bottom; }
.act { background-color: #3a3334; background-size: 100% 2px; }
.clock { color: #eee; text-align: center; line-height: 17px; padding-top: 2px; letter-spacing: -0.5px; }
.peek { border-left: 1px solid #555; margin-left: 1px; }
```
